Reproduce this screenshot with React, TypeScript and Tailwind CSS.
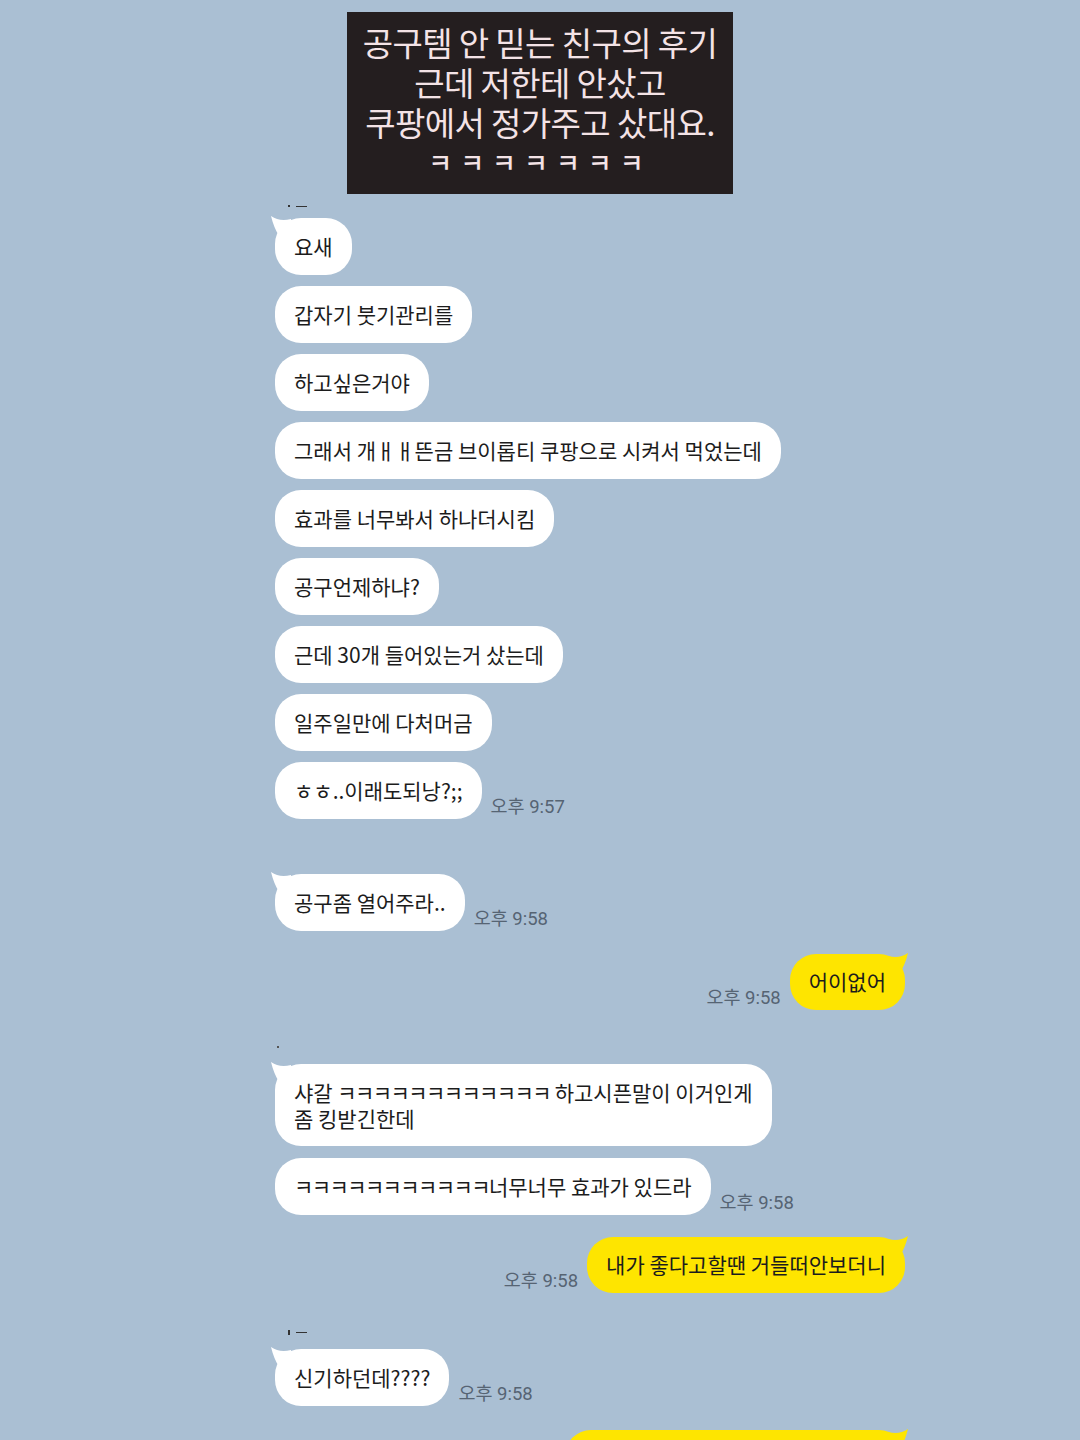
import React from "react";

type Msg = {
  text: string;
  me?: boolean;
  time?: string;
  tail?: boolean;
  gap?: number;
  mark?: "name" | "dot";
  blank?: boolean;
};

const font = { fontFamily: '"Noto Sans CJK KR", "Noto Sans", sans-serif' };
const timeFont = { fontFamily: 'Roboto, "Noto Sans CJK KR", sans-serif' };

function LeftTail() {
  return (
    <svg
      className="absolute left-[-4px] top-[-2px]"
      width="22"
      height="30"
      viewBox="0 0 22 30"
    >
      <path d="M0 0 C6 4 12 5 20 3 L20 28 C10 26 4 16 0 0 Z" fill="#ffffff" />
    </svg>
  );
}

function RightTail() {
  return (
    <svg
      className="absolute right-[-3px] top-[-1px]"
      width="22"
      height="30"
      viewBox="0 0 22 30"
    >
      <path d="M22 0 C16 4 10 5 2 3 L2 28 C12 26 18 16 22 0 Z" fill="#fee500" />
    </svg>
  );
}

function Time({ t }: { t: string }) {
  return (
    <span
      className="mb-[1px] whitespace-nowrap text-[18.5px] leading-[22px] text-[#566473]"
      style={timeFont}
    >
      {t}
    </span>
  );
}

// ㅋ runs are set a little tighter, the way the phone font draws them
function Words({ text }: { text: string }) {
  const parts = text.split(/(ㅋ+)/);
  return (
    <div>
      {parts.map((p, i) =>
        p.startsWith("ㅋ") ? (
          <span key={i} className="tracking-[-1.6px]">
            {p}
          </span>
        ) : (
          <React.Fragment key={i}>{p}</React.Fragment>
        )
      )}
    </div>
  );
}

function Bubble({ m }: { m: Msg }) {
  const multi = m.text.includes("\n");
  if (m.me) {
    return (
      <div className="flex items-end justify-end gap-[9px] pr-[175px]">
        {m.time && <Time t={m.time} />}
        <div className="relative">
          {m.tail && <RightTail />}
          {m.blank ? (
            <div className="relative h-[57px] w-[340px] rounded-[26px] bg-[#fee500]" />
          ) : (
            <div className="relative flex h-[56px] items-center whitespace-nowrap rounded-[26px] bg-[#fee500] px-[19px] text-[21px] text-[#1c1c1c]">
              {m.text}
            </div>
          )}
        </div>
      </div>
    );
  }
  return (
    <div className="flex items-end gap-[9px] pl-[275px]">
      <div className="relative">
        {m.tail && <LeftTail />}
        <div
          className={
            multi
              ? "relative flex min-h-[82px] items-center whitespace-pre rounded-[26px] bg-white px-[19px] py-[14px] text-[21px] leading-[26px] text-[#1c1c1c]"
              : "relative flex h-[57px] items-center whitespace-nowrap rounded-[26px] bg-white px-[19px] text-[21px] text-[#1c1c1c]"
          }
        >
          <Words text={m.text} />
        </div>
      </div>
      {m.time && <Time t={m.time} />}
    </div>
  );
}

const messages: Msg[] = [
  { text: "요새", tail: true, gap: 0 },
  { text: "갑자기 붓기관리를" },
  { text: "하고싶은거야" },
  { text: "그래서 개ㅐㅐ뜬금 브이롭티 쿠팡으로 시켜서 먹었는데" },
  { text: "효과를 너무봐서 하나더시킴" },
  { text: "공구언제하냐?" },
  { text: "근데 30개 들어있는거 샀는데" },
  { text: "일주일만에 다처머금" },
  { text: "ㅎㅎ..이래도되낭?;;", time: "오후 9:57" },
  { text: "공구좀 열어주라..", tail: true, time: "오후 9:58", gap: 55 },
  { text: "어이없어", me: true, tail: true, time: "오후 9:58", gap: 23 },
  {
    text: "샤갈 ㅋㅋㅋㅋㅋㅋㅋㅋㅋㅋㅋㅋ 하고시픈말이 이거인게\n좀 킹받긴한데",
    tail: true,
    gap: 54,
    mark: "dot",
  },
  { text: "ㅋㅋㅋㅋㅋㅋㅋㅋㅋㅋㅋ너무너무 효과가 있드라", time: "오후 9:58", gap: 12 },
  { text: "내가 좋다고할땐 거들떠안보더니", me: true, tail: true, time: "오후 9:58", gap: 22 },
  { text: "신기하던데????", tail: true, time: "오후 9:58", gap: 56, mark: "name" },
  { text: "", me: true, tail: true, gap: 24, blank: true },
];

export default function App() {
  return (
    <div
      className="h-[1440px] w-[1080px] overflow-hidden bg-[#aabfd3]"
      style={font}
    >
      <div className="mx-auto mt-[12px] flex h-[182px] w-[386px] flex-col items-center bg-[#241e1f] pt-[10px] text-[#f4e3e6]">
        <p className="text-[33px] leading-[40px] tracking-[-0.6px]">공구템 안 믿는 친구의 후기</p>
        <p className="text-[33px] leading-[40px] tracking-[-0.6px]">근데 저한테 안샀고</p>
        <p className="text-[33px] leading-[40px] tracking-[-0.6px]">쿠팡에서 정가주고 샀대요.</p>
        <p className="text-[26px] font-medium leading-[40px] tracking-[8px]">ㅋㅋㅋㅋㅋㅋㅋ</p>
      </div>

      <div className="flex flex-col">
        <div className="flex h-[24px] items-center gap-[6px] pl-[288px]">
          <span className="h-[2px] w-[2px] bg-[#333]" />
          <span className="h-[1px] w-[11px] bg-[#333]" />
        </div>
        {messages.map((m, i) => {
          const gap = m.gap ?? 11;
          return (
            <div key={i} style={{ marginTop: i === 0 ? 0 : gap }}>
              {m.mark === "dot" && (
                <div className="-mt-[18px] mb-[16px] h-[2px] pl-[277px]">
                  <span className="block h-[2px] w-[2px] bg-[#555]" />
                </div>
              )}
              {m.mark === "name" && (
                <div className="-mt-[22px] mb-[12px] flex h-[10px] items-center gap-[6px] pl-[288px]">
                  <span className="h-[5px] w-[2px] bg-[#333]" />
                  <span className="h-[1px] w-[11px] bg-[#333]" />
                </div>
              )}
              <Bubble m={m} />
            </div>
          );
        })}
      </div>
    </div>
  );
}
